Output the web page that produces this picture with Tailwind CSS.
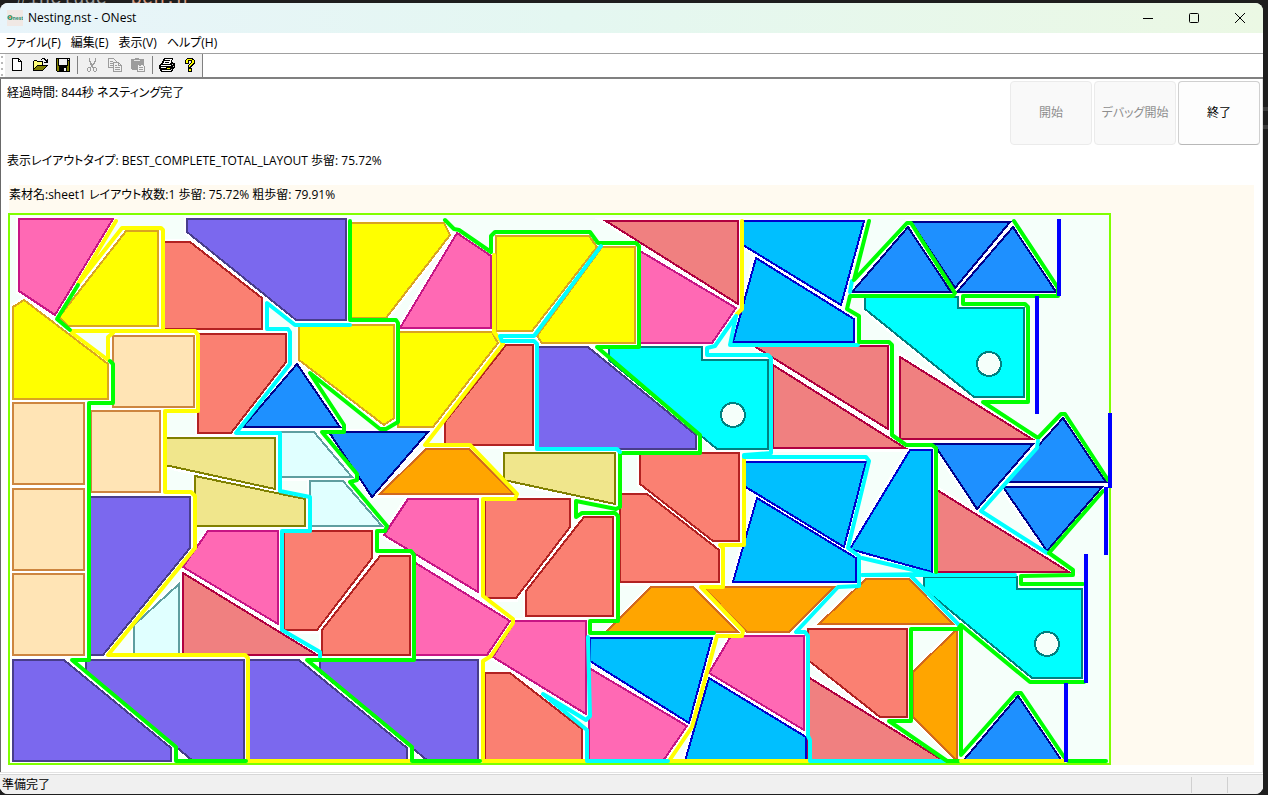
<!DOCTYPE html>
<html lang="ja">

<head>
    <meta charset="UTF-8">
    <meta name="viewport" content="width=device-width, initial-scale=1.0">
    <title>Nesting.nst - ONest</title>
    <script src="https://cdn.jsdelivr.net/npm/@tailwindcss/browser@4"></script>
</head>

<body class="flex h-screen flex-col overflow-hidden bg-[#1e1e1e] pb-px font-['Open_Sans','Noto_Sans_CJK_JP',sans-serif] text-xs text-black [font-feature-settings:'palt']">
    <!-- Editor window behind -->
    <div class="flex h-[3px] shrink-0 items-end gap-3 overflow-hidden pl-4 font-['Liberation_Mono',monospace] text-[19px] leading-[8px] text-[#9b9b9b]">
        <span>#include</span><span class="text-[#d69d85]">"ben.h"</span>
    </div>

    <div class="flex min-h-0 flex-1">
        <main class="flex min-w-0 flex-1 flex-col overflow-hidden rounded-lg bg-white">
            <!-- Title bar -->
            <header class="flex h-[30px] shrink-0 items-center bg-linear-to-r from-[#e8f4fa] via-[#e4f7f1] via-45% to-[#ebf8e4] pl-[7px]">
                <svg class="size-4" viewBox="0 0 16 16" aria-hidden="true">
                    <rect width="16" height="16" fill="#f0e8e4" />
                    <circle cx="3" cy="7.500" r="1.900" fill="none" stroke="#2f9e78" stroke-width="1.400" />
                    <path d="M2 8l2-1.500" stroke="#e8743b" stroke-width="1.200" />
                    <text x="5.500" y="9.500" font-size="5" font-weight="700" fill="#2f8f74">nest</text>
                </svg>
                <h1 class="ml-[5px] flex-1">Nesting.nst - ONest</h1>
                <button class="grid h-full w-[46px] place-items-center" aria-label="最小化">
                    <svg class="size-3" viewBox="0 0 12 12" stroke="#000"><path d="M1 6.500h10" /></svg>
                </button>
                <button class="grid h-full w-[46px] place-items-center" aria-label="最大化">
                    <svg class="size-3" viewBox="0 0 12 12" stroke="#000" fill="none"><rect x="1.500" y="1.500" width="9" height="9" rx="1" /></svg>
                </button>
                <button class="grid h-full w-[46px] place-items-center" aria-label="閉じる">
                    <svg class="size-3" viewBox="0 0 12 12" stroke="#000"><path d="M1 1l10 10M11 1L1 11" /></svg>
                </button>
            </header>

            <!-- Menu -->
            <nav class="flex h-[21px] shrink-0 items-center gap-[10px] border-b border-[#a0a0a0] pl-[6px]">
                <button>ファイル(F)</button>
                <button>編集(E)</button>
                <button>表示(V)</button>
                <button>ヘルプ(H)</button>
            </nav>

            <!-- Toolbar -->
            <div class="flex h-[25px] shrink-0 border-b-2 border-[#808080]">
                <div class="w-[5px] bg-[radial-gradient(circle_at_2px_3px,#b8b8b8_1px,transparent_1px)] bg-size-[6px_6px]"></div>
                <div class="flex items-start border-r border-[#808080] bg-[#f0f0f0] pr-px">
                    <button class="grid h-[22px] w-[23px] place-items-center" aria-label="新規作成">
                        <svg class="size-4" viewBox="0 0 16 16" shape-rendering="crispEdges">
                            <path d="M3 1h7v1h1v1h1v1h1v10H3z" fill="#000" />
                            <path d="M4 2h5v3h3v8H4zM10 3h1v1h-1z" fill="#fff" />
                        </svg>
                    </button>
                    <button class="grid h-[22px] w-[23px] place-items-center" aria-label="開く">
                        <svg class="size-4" viewBox="0 0 16 16" shape-rendering="crispEdges">
                            <path d="M1 4h1V3h3v1h6v4h5v1h-1v1h-1v1h-1v1h-1v1h-1v1H1z" fill="#000" />
                            <path d="M2 4h3v1h5v3H5v1H4v1H3v1H2z" fill="#ffff7a" />
                            <path d="M5 9h9v1h-1v1h-1v1h-1v1H2v-1h1v-1h1v-1h1z" fill="#808000" />
                            <path d="M9 2h1V1h3v1h1v1h1V2h1v4h-4V5h2V4h-1V3h-1V2h-2v1H9z" fill="#000" />
                        </svg>
                    </button>
                    <button class="grid h-[22px] w-[23px] place-items-center" aria-label="保存">
                        <svg class="size-4" viewBox="0 0 16 16" shape-rendering="crispEdges">
                            <path d="M1 1h14v14H2v-1H1z" fill="#000" />
                            <path d="M2 2h1v7h1v1h8V9h1V4h1v10h-2v-4H4v4H2z" fill="#808000" />
                            <path d="M4 2h8v6H4zM13 2h1v1h-1zM9 11h2v3H9z" fill="#f0f0f0" />
                        </svg>
                    </button>
                    <span class="mt-[2px] mr-[2px] ml-[3px] h-[18px] w-px bg-[#808080]"></span>
                    <button disabled class="grid h-[22px] w-[23px] place-items-center" aria-label="切り取り">
                        <svg class="size-4" viewBox="0 0 16 16" shape-rendering="crispEdges">
                            <path d="M5 1h1v3h1v2h1v1h1V6h1V4h1V1h1v4h-1v2h-1v1H9v2h3v1h1v3h-1v1h-2v-1H9v-3H8v-1H7v4H6v1H4v-1H3v-3h1v-1h3V8H6V5H5zM5 11H4v3h2v-3zm5 0v3h2v-3z" fill="#9c9c9c" />
                        </svg>
                    </button>
                    <button disabled class="grid h-[22px] w-[23px] place-items-center" aria-label="コピー">
                        <svg class="size-4" viewBox="0 0 16 16" shape-rendering="crispEdges" fill="#f0f0f0" stroke="#9c9c9c">
                            <path d="M1.500 1.500h5l3 3v6h-8zM3 4.500h3M3 6.500h5M3 8.500h5" />
                            <path d="M6.500 5.500h5l3 3v6h-8zM11.500 5.500v3h3M8 8.500h2M8 10.500h5M8 12.500h5" />
                        </svg>
                    </button>
                    <button disabled class="grid h-[22px] w-[23px] place-items-center" aria-label="貼り付け">
                        <svg class="size-4" viewBox="0 0 16 16" shape-rendering="crispEdges">
                            <path d="M1 2h4V1h4v1h5v11H2v-1H1z" fill="#9c9c9c" />
                            <path d="M4 3h6v1H4z" fill="#e4e4e4" />
                            <path d="M7.500 7.500h5l2 2v5h-7zM9 10.500h4M9 12.500h4M9 8.500h2" fill="#f0f0f0" stroke="#9c9c9c" />
                        </svg>
                    </button>
                    <span class="mt-[2px] mr-[2px] ml-[3px] h-[18px] w-px bg-[#808080]"></span>
                    <button class="grid h-[22px] w-[23px] place-items-center" aria-label="印刷">
                        <svg class="size-4" viewBox="0 0 16 16" shape-rendering="crispEdges">
                            <path d="M5 1h9v2h-1v2h1v1h2v5h-1v1h-1v2h-1v1H2v-1H1v-2H0V8h1V7h1V6h1V4h1V2h1z" fill="#000" />
                            <path d="M6 2h7v1h-1v3h-1v1H4V6h1V4h1zM2 8h10v1H2zM2 10h5v1H2zM3 13h9v1H3z" fill="#fff" />
                            <path d="M6 3h5v1H6zM6 5h4v1H6z" fill="#000" />
                            <path d="M13 7h1v1h-1zM14 9h1v1h-1zM12 12h1v1h-1z" fill="#d0d0d0" />
                            <path d="M8 11h3v1H8z" fill="#ffff00" />
                        </svg>
                    </button>
                    <button class="grid h-[22px] w-[23px] place-items-center" aria-label="ヘルプ">
                        <svg class="size-4" viewBox="0 0 16 16" shape-rendering="crispEdges">
                            <path d="M5 1h6v1h1v1h1v4h-1v1h-1v1h-1v1h-1v1H6V8h1V7h1V6h1V4H7v3H3V3h1V2h1zM6 11h4v4H6z" fill="#000" />
                            <path d="M5 2h5v1h2v3h-1v1h-1v1H9v1H8v1H7V8h1V7h1V6h1V3H6v3H4V3h1zM7 12h2v2H7z" fill="#ffff00" />
                        </svg>
                    </button>
                </div>
            </div>

            <!-- Client area -->
            <section class="flex min-h-0 flex-1 flex-col border-r border-l border-r-[#e3e3e3] border-l-[#696969]">
                <div class="flex h-[106px] shrink-0 justify-between pt-[2px] pr-[2px] pl-[6px]">
                    <div class="flex flex-col gap-[44px] leading-6">
                        <p>経過時間: 844秒 ネスティング完了</p>
                        <p>表示レイアウトタイプ: BEST_COMPLETE_TOTAL_LAYOUT 歩留: 75.72%</p>
                    </div>
                    <div class="flex gap-[2px]">
                        <button disabled class="h-16 w-[82px] rounded border border-[#ebebeb] bg-[#f9f9f9] text-[#8e8e8e]">開始</button>
                        <button disabled class="h-16 w-[82px] rounded border border-[#ebebeb] bg-[#f9f9f9] text-[#8e8e8e]">デバッグ開始</button>
                        <button class="h-16 w-[82px] rounded border border-[#d0d0d0] border-b-[#b8b8b8] bg-[#fdfdfd]">終了</button>
                    </div>
                </div>

                <div class="mr-2 ml-2 bg-[#fffaf0]">
                    <p class="h-7 leading-5">素材名:sheet1 レイアウト枚数:1 歩留: 75.72% 粗歩留: 79.91%</p>
                    <svg id="layout" class="-ml-px w-[1104px] shrink-0" viewBox="8 213 1104 552" shape-rendering="crispEdges" role="img" aria-label="sheet1">
                        <rect x="9" y="214" width="1101" height="550" fill="#f5fffa" />
                        <g id="gaps" fill="#fff" stroke="#fff" stroke-width="7"></g>
                        <g id="parts" stroke-width="2"></g>
                        <g id="cuts" fill="none" stroke-width="4" stroke-linejoin="round" stroke-linecap="round" shape-rendering="auto"></g>
                        <rect x="9" y="214" width="1101" height="550" fill="none" stroke="#7fff00" stroke-width="2" />
                        <path d="M1059 219v77M1037 296v118M1110 413v75M1106 487v68M1086 554v129M1066 683v79" fill="none" stroke="#0000ff" stroke-width="4" />
                    </svg>
                </div>
            </section>

            <!-- Status bar -->
            <footer class="flex h-5 shrink-0 items-center border-t border-[#d7d7d7] bg-[#f0f0f0] pl-[2px] shadow-[0_-1px_0_#fff,0_-2px_0_#e3e3e3]">
                <span class="flex-1">準備完了</span>
                <span class="h-4 w-9 border-l border-[#d0d0d0]"></span>
                <span class="h-4 w-9 border-l border-[#d0d0d0]"></span>
            </footer>
        </main>

        <div class="flex w-[5px] flex-col overflow-hidden">
            <div class="mt-[104px] h-[22px] border-y-4 border-[#3c3c3c]"></div>
        </div>
    </div>

    <script>
        // part type -> [fill, outline]
        const colors = {
            pink: ['#ff69b4', '#c71585'],
            yellow: ['#ffff00', '#daa520'],
            salmon: ['#fa8072', '#b22222'],
            purple: ['#7b68ee', '#483d8b'],
            sand: ['#ffe4b5', '#cd853f'],
            dodger: ['#1e90ff', '#00008b'],
            sky: ['#00bfff', '#0000cd'],
            aqua: ['#00ffff', '#008080'],
            coral: ['#f08080', '#b00040'],
            khaki: ['#f0e68c', '#808000'],
            ice: ['#e0ffff', '#5f9ea0'],
            orange: ['#ffa500', '#d2691e'],
        };

        const parts = [
            ['pink', '19,219 113,219 55,315 19,291'],
            ['yellow', '126,231 158,231 158,326 68,326 59,317'],
            ['salmon', '163,242 190,242 262,298 262,329 163,329'],
            ['purple', '187,219 346,219 346,320 296,320 187,232'],
            ['yellow', '24,300 108,364 108,399 13,399 13,307'],
            ['sand', '113,336 194,336 194,407 113,407'],
            ['sand', '13,403 84,403 84,484 13,484'],
            ['sand', '91,411 160,411 160,492 91,492'],
            ['sand', '13,489 84,489 84,570 13,570'],
            ['sand', '13,574 84,574 84,655 13,655'],
            ['salmon', '198,334 286,334 286,362 231,433 198,433'],
            ['yellow', '350,223 444,223 450,235 386,318 350,318'],
            ['pink', '457,233 491,256 491,328 400,328'],
            ['yellow', '299,325 394,325 394,418 384,425 299,360'],
            ['yellow', '398,332 492,332 498,343 433,427 398,427'],
            ['salmon', '506,345 533,345 533,445 445,445 445,422'],
            ['dodger', '297,364 340,427 243,427'],
            ['dodger', '329,432 428,432 372,497'],
            ['yellow', '496,236 589,236 597,247 532,331 496,331'],
            ['yellow', '602,247 635,247 635,343 542,343 537,336'],
            ['coral', '606,221 738,221 738,304'],
            ['pink', '640,251 736,308 712,343 640,343'],
            ['purple', '538,347 588,347 696,435 696,449 538,449'],
            ['aqua', '609,347 702,347 702,360 768,360 768,449 717,449 609,360'],
            ['sky', '743,221 864,221 841,305 743,245'],
            ['sky', '756,258 854,319 854,342 733,342'],
            ['dodger', '908,227 951,292 852,292'],
            ['dodger', '911,222 1010,222 955,288'],
            ['dodger', '1013,227 1056,292 957,292'],
            ['aqua', '865,297 958,297 958,308 1024,308 1024,397 974,397 865,309'],
            ['coral', '754,346 888,346 888,429'],
            ['coral', '773,365 905,448 773,448'],
            ['coral', '900,357 1032,439 900,439'],
            ['dodger', '934,444 1033,444 977,509'],
            ['dodger', '1063,418 1106,482 1006,482'],
            ['dodger', '1003,487 1102,487 1047,551'],
            ['coral', '937,490 1069,572 937,572'],
            ['sky', '910,450 932,450 932,572 850,549'],
            ['sky', '744,462 866,462 844,547 744,486'],
            ['sky', '757,498 856,558 856,582 733,582'],
            ['aqua', '924,577 1017,577 1017,589 1082,589 1082,678 1032,678 924,589'],
            ['orange', '866,579 909,579 953,624 819,624'],
            ['orange', '651,587 693,587 738,632 606,632'],
            ['orange', '703,587 834,587 789,632 747,632'],
            ['salmon', '808,629 907,629 907,717 880,717 808,660'],
            ['coral', '808,677 944,761 808,761'],
            ['orange', '957,629 957,761 913,717 913,672'],
            ['dodger', '1018,696 1062,761 963,761'],
            ['pink', '731,636 804,636 804,730 709,673'],
            ['sky', '709,678 806,737 806,761 685,761'],
            ['sky', '590,638 712,638 689,723 590,661'],
            ['pink', '589,668 687,726 663,761 589,761'],
            ['pink', '515,621 586,621 586,714 493,657'],
            ['salmon', '485,673 510,673 582,729 582,761 485,761'],
            ['purple', '13,660 64,660 171,748 171,761 13,761'],
            ['purple', '86,660 244,660 244,761 193,761 86,672'],
            ['purple', '249,660 299,660 407,748 407,761 249,761'],
            ['purple', '320,660 478,660 478,761 428,761 320,672'],
            ['purple', '90,497 190,497 190,548 103,655 90,655'],
            ['khaki', '165,438 275,438 275,489 165,465'],
            ['khaki', '195,476 305,499 305,526 195,526'],
            ['ice', '280,432 314,432 352,477 280,477'],
            ['ice', '310,481 343,481 382,526 310,526'],
            ['ice', '134,625 179,584 179,655 134,655'],
            ['pink', '208,531 278,531 278,624 183,567'],
            ['coral', '183,573 317,655 183,655'],
            ['pink', '408,499 478,499 478,592 384,535'],
            ['pink', '414,562 510,621 487,655 414,655'],
            ['salmon', '284,531 372,531 372,558 317,630 284,630'],
            ['salmon', '380,556 410,556 410,655 322,655 322,630'],
            ['salmon', '485,499 570,499 570,527 516,598 485,598'],
            ['salmon', '584,517 613,517 613,616 526,616 526,591'],
            ['salmon', '640,453 739,453 739,541 713,541 640,484'],
            ['salmon', '620,494 647,494 719,550 719,582 620,582'],
            ['orange', '426,449 469,449 514,494 380,494'],
            ['khaki', '504,453 615,453 615,504 504,480'],
        ];

        // round holes in the aqua plates
        const holes = [[733, 415], [989, 364], [1047, 644]];

        const cuts = [
            ['#ffff00', '116,221 78,284 122,228 161,228 163,230 163,331'],
            ['#ffff00', '113,333 108,337 108,360 72,333 72,331 195,331 198,335 198,411 165,411 165,492 191,492 195,496 195,548 108,655 245,655 248,658 248,761 410,761'],
            ['#00ffff', '350,325 295,325 267,303 267,329 288,329 290,332 290,364 236,433 280,433 280,491 310,497 310,531 282,531 282,630 320,652 320,657'],
            ['#00ff00', '78,285 57,319 70,330'],
            ['#00ff00', '110,361 113,364 113,403 89,403 89,660 72,660 176,747 176,761 214,761 246,761'],
            ['#ffff00', '494,255 494,332 503,344 425,445 470,445 517,494 515,499 483,499 483,596 513,619 513,623 491,656 483,661 483,761 587,761'],
            ['#00ff00', '350,221 350,320 396,320 398,323 398,422 386,429 380,429 310,373 344,425 344,432 322,432 357,474 357,480 350,482 387,526 385,531 377,531 377,551 411,551 414,555 414,660 307,660 412,747 412,761 480,761'],
            ['#00ff00', '445,220 454,229 459,230 491,252 491,236 495,232 590,232 598,243 636,243 639,246 639,347 597,347 700,435 700,453 620,453 620,507 616,509 576,501 576,517 582,513 615,513 618,516 618,621 590,621 590,633 714,633'],
            ['#00ffff', '601,246 534,336 500,336 502,341 534,341 537,344 537,449 617,449 620,452'],
            ['#ffff00', '742,221 742,309 737,314'],
            ['#ffff00', '744,458 744,545 720,545 723,548 723,587 701,587 743,631 742,636 717,636 692,727 669,761 810,761'],
            ['#00ffff', '858,345 730,345 736,316 715,346 707,348 707,355 768,355 771,358 771,453 744,455 744,457 866,457 869,461 848,548 859,556 859,586 838,587 796,632 805,632 808,636 808,736 810,740 810,761 945,761'],
            ['#00ffff', '862,558 930,574 862,575 910,575 959,625'],
            ['#00ffff', '910,575 1015,575'],
            ['#00ffff', '588,637 590,716 586,720 543,694 587,730 587,761 668,761'],
            ['#00ffff', '852,281 850,292'],
            ['#00ff00', '869,221 854,280 907,223 911,223 955,293 953,296 850,296 847,309 859,316 859,342 889,342 892,345 892,435 906,445 932,445 936,448 936,572'],
            ['#00ff00', '1014,221 1058,288 1058,296 963,296 963,304 1025,304 1028,307 1028,402 983,402 1038,438 1061,414 1065,414 1108,480'],
            ['#00ffff', '1038,441 1037,448 981,511 1047,553'],
            ['#00ff00', '1103,491 1049,553 1073,570 1073,575 1021,576 1021,584 1083,584'],
            ['#00ff00', '961,625 958,629 911,629 911,721 889,721 947,761 959,761'],
            ['#00ff00', '1084,682 1030,682 961,625 961,755 1016,693 1021,693 1064,757'],
            ['#ffff00', '961,761 1064,761'],
            ['#00ff00', '1068,761 1106,761'],
        ];

        function draw(groupId, tag, attrs) {
            const el = document.createElementNS('http://www.w3.org/2000/svg', tag);
            for (const [key, value] of Object.entries(attrs)) el.setAttribute(key, value);
            document.getElementById(groupId).appendChild(el);
        }

        parts.forEach(([type, points]) => {
            const [fill, stroke] = colors[type];
            draw('gaps', 'polygon', { points });
            draw('parts', 'polygon', { points, fill, stroke });
        });
        holes.forEach(([cx, cy]) => {
            draw('parts', 'circle', { cx, cy, r: 12, fill: '#f5fffa', stroke: '#008080' });
        });
        cuts.forEach(([stroke, points]) => draw('cuts', 'polyline', { points, stroke }));
    </script>
</body>

</html>
